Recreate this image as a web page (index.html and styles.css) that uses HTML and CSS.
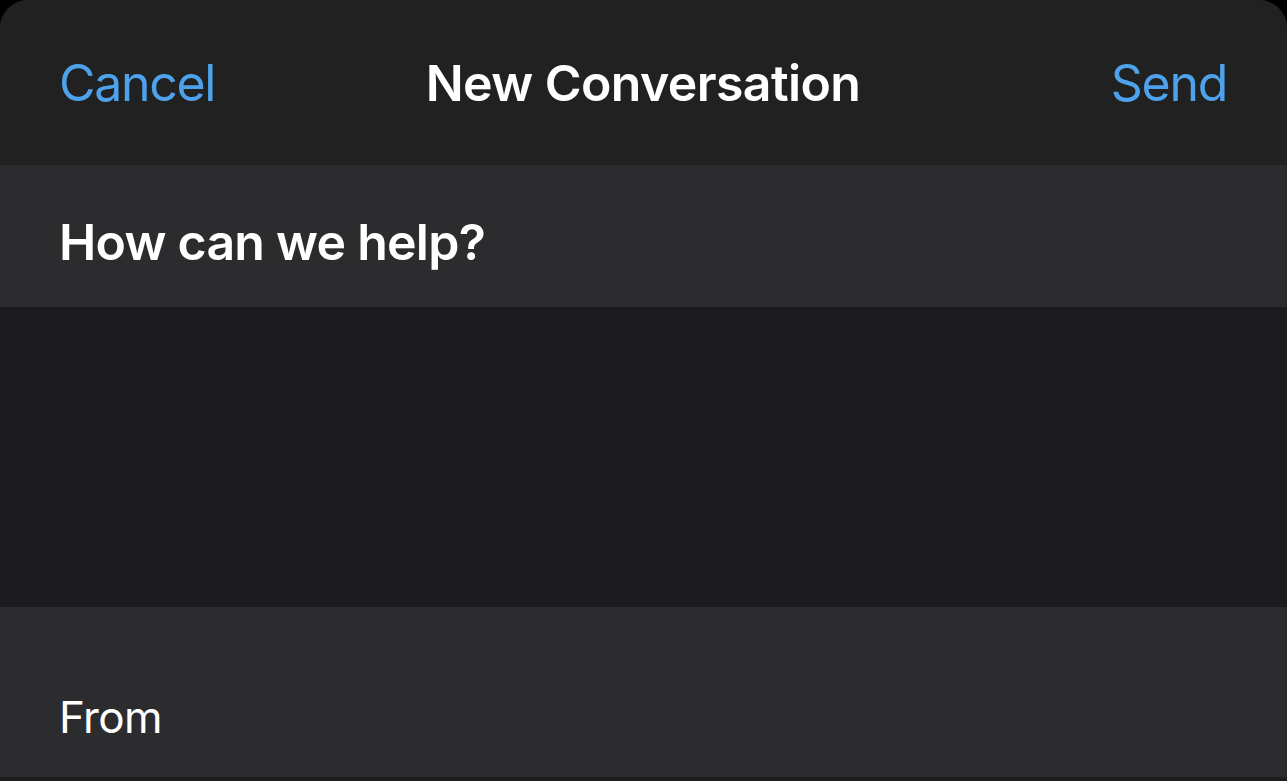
FILE: index.html
```html
<!DOCTYPE html>
<html lang="en">
<head>
<meta charset="utf-8">
<title>New Conversation</title>
<link rel="stylesheet" href="styles.css">
</head>
<body>
<div class="sheet">
  <header class="navbar">
    <span class="nav-btn nav-left">Cancel</span>
    <h1 class="nav-title">New Conversation</h1>
    <span class="nav-btn nav-right">Send</span>
  </header>
  <div class="subject-row">
    <h2 class="subject">How can we help?</h2>
  </div>
  <div class="message-area"></div>
  <div class="from-section">
    <span class="from-label">From</span>
  </div>
</div>
</body>
</html>
```

FILE: styles.css
```css
html, body {
  margin: 0;
  padding: 0;
  background: #000;
  height: 100%;
}
body {
  font-family: "Inter", "Liberation Sans", sans-serif;
  -webkit-font-smoothing: antialiased;
}
.sheet {
  width: 1287px;
  height: 781px;
  display: flex;
  flex-direction: column;
  border-radius: 28px 28px 0 0;
  overflow: hidden;
  background: #1c1c1e;
}
.navbar {
  height: 165px;
  flex: none;
  background: #212121;
  display: grid;
  grid-template-columns: 1fr auto 1fr;
  align-items: center;
  padding: 0 60px 0 59px;
  box-sizing: border-box;
}
.nav-btn {
  color: #4ea2ec;
  font-size: 50px;
  font-weight: 400;
  letter-spacing: -1.3px;
  line-height: 1;
}
.nav-left { justify-self: start; }
.nav-right { justify-self: end; }
.nav-title {
  margin: 0;
  color: #fff;
  font-size: 50px;
  font-weight: 600;
  letter-spacing: -0.6px;
  line-height: 1;
}
.subject-row {
  height: 142px;
  flex: none;
  background: #2c2c2e;
  display: flex;
  align-items: center;
  padding: 0 60px 0 59px;
  box-sizing: border-box;
}
.subject {
  margin: 0;
  color: #fff;
  font-size: 50px;
  font-weight: 600;
  letter-spacing: -0.75px;
  line-height: 1;
  padding-top: 12px;
}
.message-area {
  height: 300px;
  flex: none;
  background: #1c1c1e;
}
.from-section {
  height: 172px;
  flex: none;
  background: #2c2c2e;
  border-bottom: 2px solid #1e1e20;
  display: flex;
  align-items: flex-end;
  padding: 0 60px 38px 59px;
  box-sizing: border-box;
}
.from-label {
  color: #fff;
  font-size: 44px;
  font-weight: 400;
  letter-spacing: -0.6px;
  line-height: 1;
}
```
